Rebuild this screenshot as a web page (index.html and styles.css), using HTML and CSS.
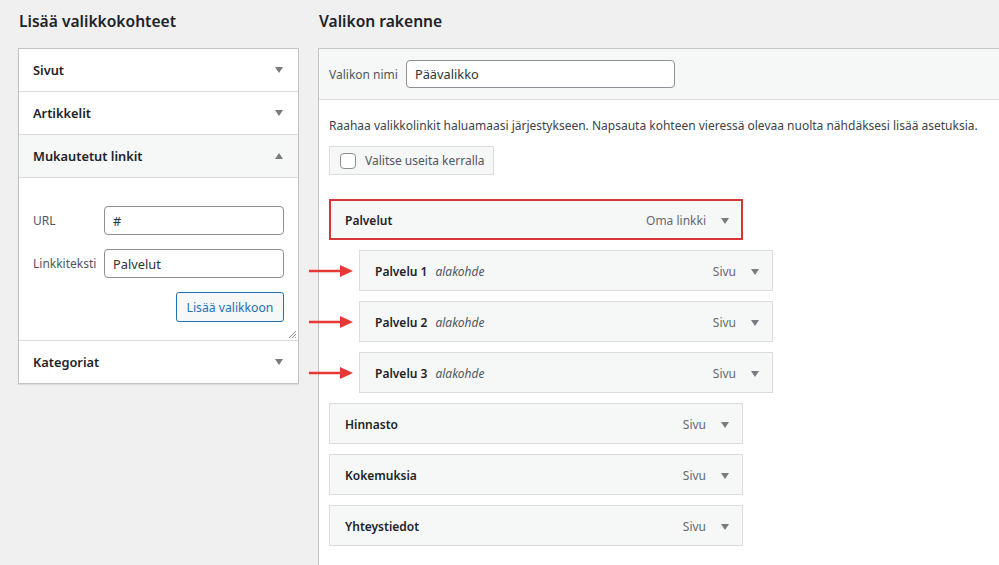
FILE: index.html
```html
<!DOCTYPE html>
<html lang="fi">
<head>
<meta charset="utf-8">
<title>Valikot</title>
<link rel="stylesheet" href="styles.css">
</head>
<body>
<div class="page">
  <section class="col-left">
    <h2 class="col-title">Lisää valikkokohteet</h2>
    <div class="accordion">
      <div class="acc-row"><span>Sivut</span><i class="tri down"></i></div>
      <div class="acc-row"><span>Artikkelit</span><i class="tri down"></i></div>
      <div class="acc-row open"><span>Mukautetut linkit</span><i class="tri up"></i></div>
      <div class="acc-body">
        <div class="field">
          <label class="field-label">URL</label>
          <div class="input">#</div>
        </div>
        <div class="field">
          <label class="field-label">Linkkiteksti</label>
          <div class="input">Palvelut</div>
        </div>
        <div class="btn-row"><span class="btn-primary-outline">Lisää valikkoon</span></div>
        <svg class="grip" width="10" height="10" viewBox="0 0 10 10"><path d="M9 2 L2 9 M9 5 L5 9 M9 8 L8 9" stroke="#8c8f94" stroke-width="1" fill="none"/></svg>
      </div>
      <div class="acc-row last"><span>Kategoriat</span><i class="tri down"></i></div>
    </div>
  </section>

  <section class="col-right">
    <h2 class="col-title">Valikon rakenne</h2>
    <div class="menu-panel">
      <div class="menu-header">
        <label class="name-label">Valikon nimi</label>
        <div class="input name-input">Päävalikko</div>
      </div>
      <div class="menu-body">
        <p class="hint">Raahaa valikkolinkit haluamaasi järjestykseen. Napsauta kohteen vieressä olevaa nuolta nähdäksesi lisää asetuksia.</p>
        <div class="bulk"><span class="checkbox"></span><span>Valitse useita kerralla</span></div>
        <ul class="items">
          <li class="item highlight"><span class="item-title">Palvelut</span><span class="item-type">Oma linkki</span><i class="tri down"></i></li>
          <li class="item sub"><svg class="arrow" width="46" height="14" viewBox="0 0 46 14"><path d="M1 7 H34" stroke="#e53935" stroke-width="2.4"/><path d="M32 1 L45 7 L32 13 Z" fill="#e53935"/></svg><span class="item-title">Palvelu 1</span><em class="item-sub">alakohde</em><span class="item-type">Sivu</span><i class="tri down"></i></li>
          <li class="item sub"><svg class="arrow" width="46" height="14" viewBox="0 0 46 14"><path d="M1 7 H34" stroke="#e53935" stroke-width="2.4"/><path d="M32 1 L45 7 L32 13 Z" fill="#e53935"/></svg><span class="item-title">Palvelu 2</span><em class="item-sub">alakohde</em><span class="item-type">Sivu</span><i class="tri down"></i></li>
          <li class="item sub"><svg class="arrow" width="46" height="14" viewBox="0 0 46 14"><path d="M1 7 H34" stroke="#e53935" stroke-width="2.4"/><path d="M32 1 L45 7 L32 13 Z" fill="#e53935"/></svg><span class="item-title">Palvelu 3</span><em class="item-sub">alakohde</em><span class="item-type">Sivu</span><i class="tri down"></i></li>
          <li class="item"><span class="item-title">Hinnasto</span><span class="item-type">Sivu</span><i class="tri down"></i></li>
          <li class="item"><span class="item-title">Kokemuksia</span><span class="item-type">Sivu</span><i class="tri down"></i></li>
          <li class="item"><span class="item-title">Yhteystiedot</span><span class="item-type">Sivu</span><i class="tri down"></i></li>
        </ul>
      </div>
    </div>
  </section>
</div>
</body>
</html>
```

FILE: styles.css
```css
* { box-sizing: border-box; }
html, body { margin: 0; padding: 0; }
body {
  background: #f0f0f1;
  font-family: "Noto Sans", "Open Sans", sans-serif;
  font-size: 12px;
  color: #3c434a;
  width: 999px;
  height: 565px;
  overflow: hidden;
}
.page {
  display: flex;
  gap: 19px;
  padding-left: 18px;
}
.col-left { width: 281px; flex: none; }
.col-right { width: 720px; flex: none; }
.col-title {
  margin: 0;
  padding: 10px 0 0 1px;
  height: 48px;
  font-size: 15.6px;
  font-weight: 600;
  color: #1d2327;
  line-height: 22px;
}
.accordion {
  background: #fff;
  border: 1px solid #c3c4c7;
  box-shadow: 0 1px 1px rgba(0,0,0,.08);
}
.acc-row {
  height: 43px;
  border-bottom: 1px solid #dcdcde;
  display: flex;
  align-items: center;
  justify-content: space-between;
  padding: 0 15px 0 14px;
  font-weight: 600;
  font-size: 12.8px;
  color: #1d2327;
}
.acc-row.open { background: #f6f7f7; }
.acc-row.last { border-bottom: 0; height: 42px; }
.tri {
  display: inline-block;
  width: 0; height: 0;
  border-left: 4.5px solid transparent;
  border-right: 4.5px solid transparent;
}
.tri.down { border-top: 6px solid #787c82; }
.tri.up { border-bottom: 6px solid #787c82; }
.acc-body {
  position: relative;
  height: 163px;
  border-bottom: 1px solid #dcdcde;
  padding: 28px 14px 0 14px;
}
.field {
  display: flex;
  align-items: center;
  margin-bottom: 14px;
}
.field-label {
  width: 71px;
  flex: none;
  color: #50575e;
  font-size: 12px;
}
.input {
  height: 29px;
  border: 1px solid #8c8f94;
  border-radius: 4px;
  background: #fff;
  padding: 0 8px;
  display: flex;
  align-items: center;
  color: #2c3338;
  font-size: 12.8px;
}
.field .input { width: 181px; }
.btn-row { display: flex; justify-content: flex-end; }
.btn-primary-outline {
  height: 30px;
  width: 108px;
  justify-content: center;
  border: 1px solid #2271b1;
  border-radius: 3px;
  background: #f6f7f7;
  color: #2271b1;
  display: inline-flex;
  align-items: center;
  font-size: 12.2px;
  white-space: nowrap;
}
.grip { position: absolute; right: 1px; bottom: 1px; }

.menu-panel {
  background: #fff;
  border: 1px solid #c3c4c7;
  border-right: 0;
  border-bottom: 0;
  height: 530px;
}
.menu-header {
  height: 51px;
  background: #f6f7f7;
  border-bottom: 1px solid #dcdcde;
  display: flex;
  align-items: center;
  padding: 0 10px;
  gap: 8px;
}
.name-label { color: #50575e; font-size: 12px; white-space: nowrap; }
.name-input { width: 269px; height: 28px; font-size: 12.8px; }
.menu-body { padding: 0 10px; }
.hint {
  margin: 16px 0 0 0;
  line-height: 20px;
  font-size: 12px;
  color: #3c434a;
  white-space: nowrap;
}
.bulk {
  margin-top: 10px;
  width: 165px;
  height: 29px;
  background: #f6f7f7;
  border: 1px solid #dcdcde;
  display: flex;
  align-items: center;
  padding: 0 10px;
  gap: 9px;
  color: #50575e;
  font-size: 12px;
  white-space: nowrap;
}
.checkbox {
  flex: none;
  width: 16px; height: 16px;
  border: 1px solid #8c8f94;
  border-radius: 4px;
  background: #fff;
}
.items {
  list-style: none;
  margin: 24px 0 0 0;
  padding: 0;
  display: flex;
  flex-direction: column;
  gap: 10px;
}
.item {
  position: relative;
  width: 414px;
  height: 41px;
  background: #f6f7f7;
  border: 1px solid #dcdcde;
  display: flex;
  align-items: center;
  padding: 2px 13px 0 15px;
  color: #1d2327;
  white-space: nowrap;
}
.item.highlight { border: 2px solid #d63638; padding-left: 14px; padding-right: 12px; }
.item.sub { margin-left: 30px; }
.item-title { font-weight: 600; font-size: 12px; }
.item-sub { margin-left: 8px; color: #50575e; font-size: 12px; }
.item-type { margin-left: auto; margin-right: 15px; color: #646970; font-size: 12px; }
.arrow { position: absolute; left: -52px; top: 13px; }
```
